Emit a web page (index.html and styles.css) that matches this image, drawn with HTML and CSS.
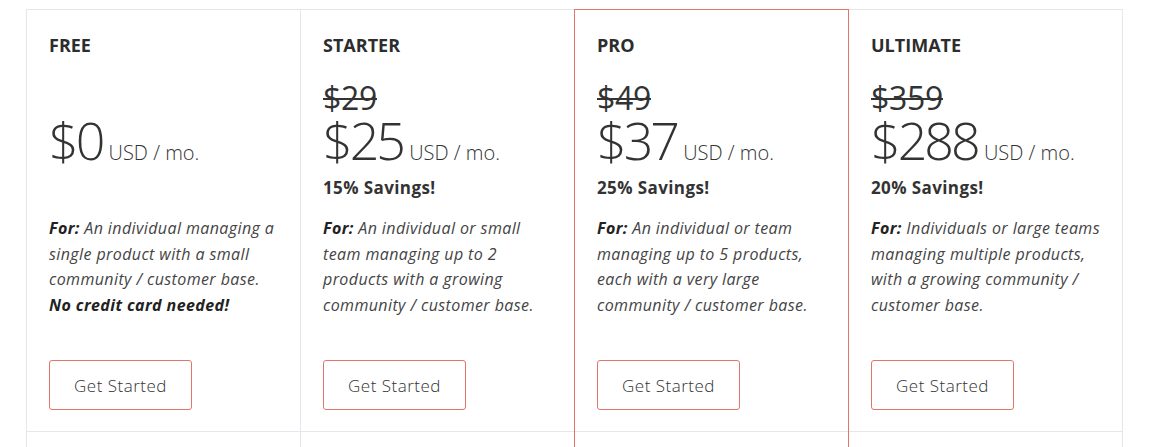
FILE: index.html
```html
<!DOCTYPE html>
<html lang="en">
<head>
  <meta charset="UTF-8">
  <meta name="viewport" content="width=device-width, initial-scale=1.0">
  <title>Pricing</title>
  <link rel="stylesheet" href="styles.css">
</head>
<body>
  <div class="pricing">
    <div class="plan">
      <div class="plan-head">
        <h3 class="plan-name">FREE</h3>
        <div class="old-price">&nbsp;</div>
        <div class="price"><span class="amount">$0</span> <span class="unit">USD / mo.</span></div>
        <div class="savings">&nbsp;</div>
        <p class="desc"><strong>For:</strong> An individual managing a single product with a small community / customer base.<br><strong>No credit card needed!</strong></p>
        <a href="#" class="btn">Get Started</a>
      </div>
      <div class="plan-body"></div>
    </div>

    <div class="plan">
      <div class="plan-head">
        <h3 class="plan-name">STARTER</h3>
        <div class="old-price"><s>$29</s></div>
        <div class="price"><span class="amount">$25</span> <span class="unit">USD / mo.</span></div>
        <div class="savings">15% Savings!</div>
        <p class="desc"><strong>For:</strong> An individual or small team managing up to 2 products with a growing community / customer base.</p>
        <a href="#" class="btn">Get Started</a>
      </div>
      <div class="plan-body"></div>
    </div>

    <div class="plan pro">
      <div class="plan-head">
        <h3 class="plan-name">PRO</h3>
        <div class="old-price"><s>$49</s></div>
        <div class="price"><span class="amount">$37</span> <span class="unit">USD / mo.</span></div>
        <div class="savings">25% Savings!</div>
        <p class="desc"><strong>For:</strong> An individual or team managing up to 5 products, each with a very large community / customer base.</p>
        <a href="#" class="btn">Get Started</a>
      </div>
      <div class="plan-body"></div>
    </div>

    <div class="plan">
      <div class="plan-head">
        <h3 class="plan-name">ULTIMATE</h3>
        <div class="old-price"><s>$359</s></div>
        <div class="price"><span class="amount">$288</span> <span class="unit">USD / mo.</span></div>
        <div class="savings">20% Savings!</div>
        <p class="desc"><strong>For:</strong> Individuals or large teams managing multiple products, with a growing community / customer base.</p>
        <a href="#" class="btn">Get Started</a>
      </div>
      <div class="plan-body"></div>
    </div>
  </div>
</body>
</html>
```

FILE: styles.css
```css
body {
  margin: 0;
  font-family: "Open Sans", Arial, sans-serif;
  color: #333;
  background: #fff;
}

.pricing {
  display: flex;
  padding: 9px 0 0 26px;
}

.plan {
  width: 275px;
  margin-left: -1px;
  border: 1px solid #e6e6ee;
  border-bottom: none;
  box-sizing: border-box;
}

.plan:first-child {
  margin-left: 0;
}

.plan.pro {
  border-color: #e4736a;
  position: relative;
  z-index: 1;
}

.plan-head {
  display: flex;
  flex-direction: column;
  align-items: flex-start;
  box-sizing: border-box;
  height: 422px;
  padding: 23px 16px 21px 22px;
  border-bottom: 1px solid #e6e6ee;
}

.plan-name {
  margin: 0;
  font-size: 18px;
  font-weight: 700;
  line-height: 24px;
  color: #2d2d2d;
}

.old-price {
  margin-top: 21px;
  font-size: 32px;
  font-weight: 500;
  line-height: 40px;
  letter-spacing: -0.3px;
}

.old-price s {
  text-decoration-thickness: 2px;
}

.price {
  margin-top: 2px;
  line-height: 40px;
  white-space: nowrap;
}

.amount {
  font-size: 52px;
  font-weight: 300;
  letter-spacing: -3px;
}

.unit {
  margin-left: 2px;
  font-size: 20px;
  font-weight: 300;
}

.savings {
  margin-top: 2px;
  font-size: 17px;
  font-weight: 700;
  line-height: 24px;
  letter-spacing: 0.4px;
}

.desc {
  margin: 16px 0 0;
  font-size: 16px;
  font-style: italic;
  line-height: 25.7px;
  letter-spacing: 0.4px;
  color: #444;
}

.desc strong {
  font-weight: 700;
  color: #222;
}

.btn {
  margin-top: auto;
  display: flex;
  align-items: center;
  justify-content: center;
  box-sizing: border-box;
  width: 143px;
  height: 50px;
  border: 1px solid #e4736a;
  border-radius: 3px;
  font-size: 17px;
  font-weight: 300;
  letter-spacing: 0.5px;
  color: #333;
  text-decoration: none;
}

.plan-body {
  height: 40px;
}
```
